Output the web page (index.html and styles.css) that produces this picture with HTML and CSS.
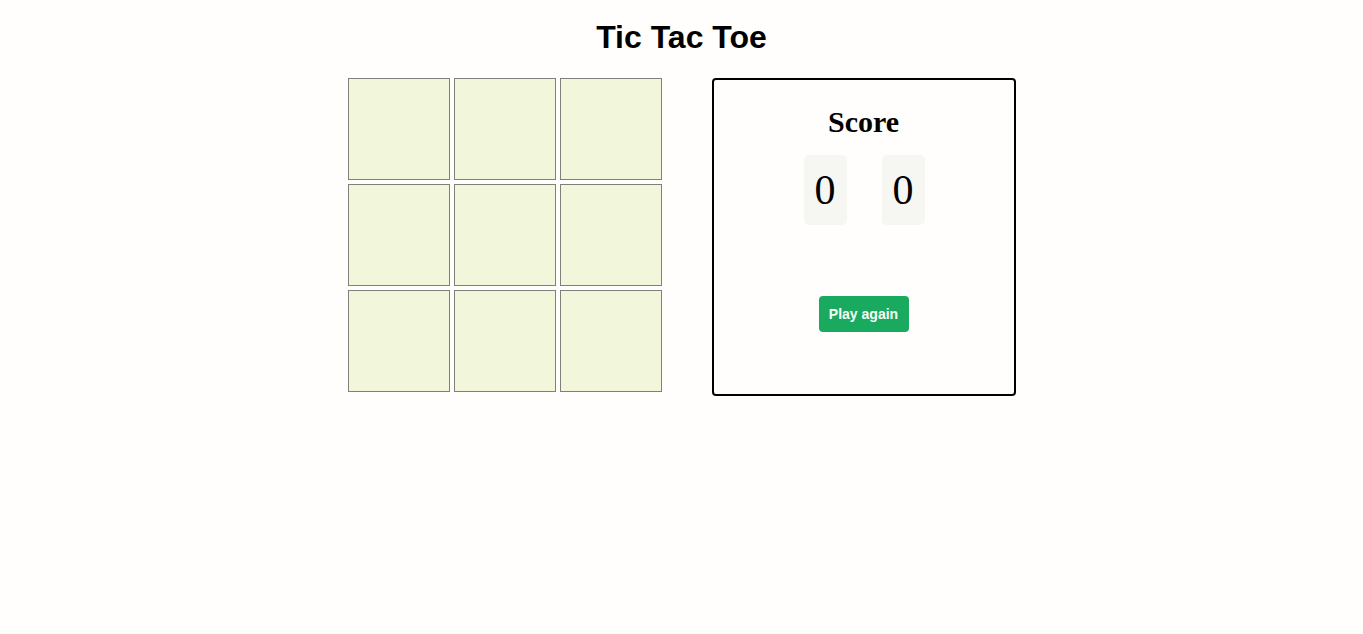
FILE: index.html
```html
<!DOCTYPE html>
<html lang="en">
<head>
<meta charset="utf-8">
<title>Tic Tac Toe</title>
<link rel="stylesheet" href="styles.css">
</head>
<body>
<h1 class="title">Tic Tac Toe</h1>
<main class="game">
  <div class="board">
    <div class="cell"></div><div class="cell"></div><div class="cell"></div>
    <div class="cell"></div><div class="cell"></div><div class="cell"></div>
    <div class="cell"></div><div class="cell"></div><div class="cell"></div>
  </div>
  <section class="panel">
    <h2 class="panel-title">Score</h2>
    <div class="scores">
      <span class="score">0</span>
      <span class="score">0</span>
    </div>
    <button class="again">Play again</button>
  </section>
</main>
</body>
</html>
```
FILE: styles.css
```css
html, body { margin: 0; padding: 0; }
body {
  background: #fffefc;
  font-family: "Liberation Sans", Arial, sans-serif;
  color: #000;
}
.title {
  margin: 19px 0 22px;
  text-align: center;
  font-size: 32px;
  font-weight: bold;
  line-height: normal;
}
.game {
  display: flex;
  justify-content: center;
  align-items: flex-start;
  gap: 50px;
}
.board {
  display: grid;
  grid-template-columns: repeat(3, 102px);
  grid-template-rows: repeat(3, 102px);
  gap: 4px;
}
.cell {
  box-sizing: border-box;
  background: #f2f7db;
  border: 1px solid #7f8079;
}
.panel {
  box-sizing: border-box;
  width: 304px;
  height: 318px;
  border: 2px solid #000;
  border-radius: 4px;
  display: flex;
  flex-direction: column;
  align-items: center;
  padding-top: 25px;
}
.panel-title {
  margin: 0;
  font-family: "Liberation Serif", "Times New Roman", serif;
  font-size: 30px;
  font-weight: bold;
  line-height: normal;
}
.scores {
  display: flex;
  gap: 35px;
  margin-top: 16px;
  margin-left: 1px;
}
.score {
  background: #f6f7f3;
  border-radius: 5px;
  padding: 11px;
  font-family: "Liberation Serif", "Times New Roman", serif;
  font-size: 42px;
  line-height: 48px;
  width: 21px;
  text-align: center;
}
.again {
  margin-top: 71px;
  height: 36px;
  width: 90px;
  padding: 0;
  border: none;
  border-radius: 4px;
  background: #1aaa5f;
  color: #f4fff8;
  font-family: "Liberation Sans", Arial, sans-serif;
  font-size: 14px;
  font-weight: bold;
}
```
